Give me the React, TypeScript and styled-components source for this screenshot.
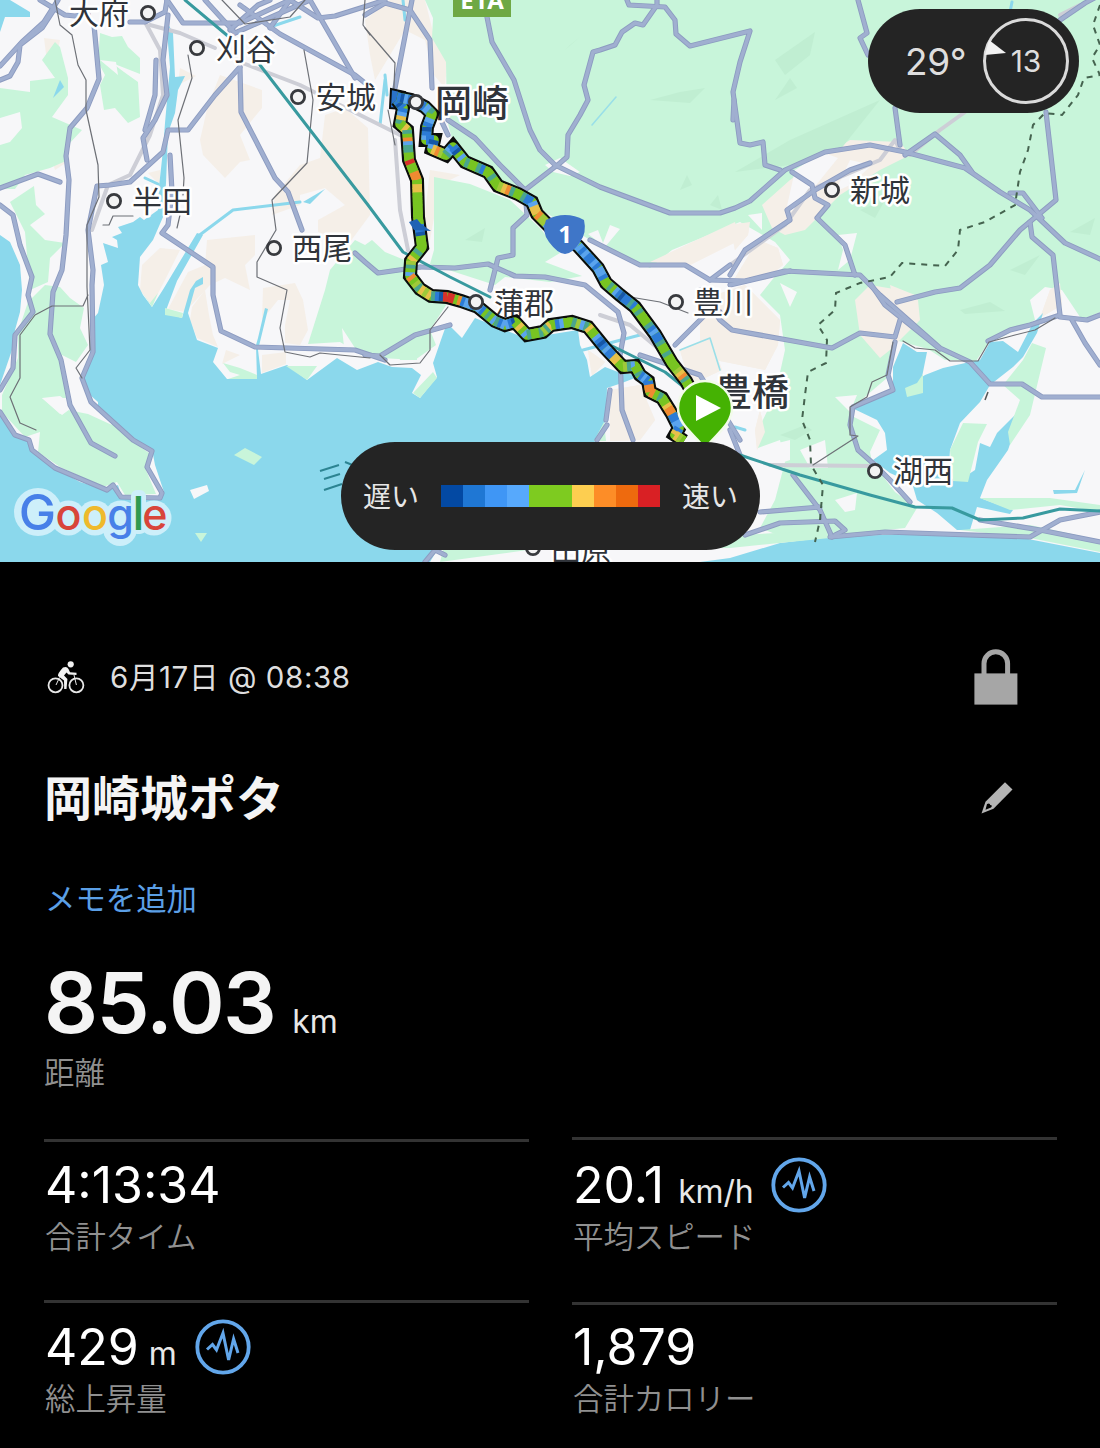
import React from 'react';
import styled, { createGlobalStyle } from 'styled-components';

const SANS = `Inter, "Noto Sans CJK JP", sans-serif`;

const GlobalStyle = createGlobalStyle`
  body { margin: 0; background: #000; font-family: ${SANS}; }
  *, *::before, *::after { box-sizing: border-box; }
`;

/* ---------- map data ---------- */

const WATER = [
  // Mikawa bay and the sea west of the Chita peninsula
  'M0,412 15,435 30,440 33,452 55,468 80,482 107,490 118,485 122,498 161,500 164,492 155,465 152,449 133,439 98,408 98,402 90,395 83,377 90,355 92,320 98,313 104,285 101,265 108,262 103,243 118,248 117,240 112,237 122,233 118,227 133,222 140,217 144,220 158,210 159,187 163,150 165,123 170,67 166,20 173,33 175,77 185,76 178,90 175,113 168,133 166,183 163,217 153,240 140,257 138,285 143,295 152,307 164,288 197,233 203,235 177,281 165,313 182,318 190,290 196,281 203,277 203,284 195,288 188,313 197,340 218,348 213,362 227,379 257,379 256,345 258,338 265,308 268,309 258,350 261,374 287,365 307,380 337,358 357,370 378,362 392,367 412,368 421,375 412,393 420,398 437,377 433,363 442,337 447,323 462,338 475,318 500,328 525,338 547,335 578,330 580,345 587,360 590,377 605,367 618,372 640,376 622,383 607,388 606,420 595,441 585,470 440,545 430,562 0,562Z',
  'M0,235 10,242 20,265 22,290 20,312 15,330 12,350 0,385Z',
  'M0,0 10,0 30,12 30,17 5,17 0,32Z',
  // Lake Hamana
  'M903,343 917,352 927,352 922,377 925,375 943,368 970,362 980,360 990,342 1003,341 1018,352 1033,323 1043,313 1037,333 1023,357 1013,367 990,385 980,402 960,423 950,450 948,478 960,480 975,470 980,443 990,447 997,433 1022,408 1008,450 987,480 980,498 1013,510 1010,514 977,507 970,530 957,530 937,513 917,500 912,483 890,473 873,460 887,450 885,433 877,420 852,408 893,390 893,367Z',
  // Enshu coast
  'M700,562 730,558 780,543 830,537 930,533 1023,538 1100,553 1100,562Z',
  'M1053,490 1075,490 1085,470 1077,493 1054,494Z',
  'M53,98 60,80 64,87Z',
  'M303,202 325,189 310,204Z',
];

const GREEN = [
  'M0,88 30,92 30,81 55,78 42,60 55,42 60,47 68,78 68,95 52,117 82,130 68,145 68,160 50,168 25,175 15,189 0,189Z',
  'M100,33 112,37 122,36 128,47 140,58 140,74 112,63 124,72 138,82 140,117 128,123 115,108 104,110 100,85 105,75 98,62Z',
  'M10,202 34,186 36,205 45,214 30,225 45,240 65,243 50,258 48,282 30,290 25,232Z',
  'M28,302 45,285 60,287 70,298 84,308 80,328 88,345 76,362 62,355 66,398 42,398 60,414 68,410 88,414 112,425 108,418 135,443 149,453 146,470 156,494 125,495 117,482 103,487 60,467 38,452 40,432 25,437 2,412 2,395 18,358 18,332Z',
  'M425,0 1100,0 1100,312 1082,320 1062,290 1045,287 1030,300 1035,320 1000,338 990,340 976,361 945,360 928,349 895,340 890,362 887,378 853,407 852,416 880,430 870,452 872,462 895,492 917,508 905,528 790,540 760,528 775,500 785,462 780,440 758,448 758,430 775,395 785,350 780,315 760,295 772,280 790,260 775,242 740,222 672,250 650,268 590,240 530,203 490,180 455,150 447,120 446,62 432,38 433,18Z',
  'M434,177 470,184 510,200 540,228 560,253 545,262 582,276 550,282 505,277 495,285 430,264 434,250Z',
  'M365,245 372,240 385,252 412,263 428,292 450,299 430,330 436,345 415,360 365,357 340,342 308,344 325,290 330,270 355,240Z',
  'M240,375 230,372 223,363 240,368 257,375 257,379 228,379Z',
  'M286,366 317,366 307,380Z',
  'M142,292 150,303 158,293 152,307Z M165,308 183,313 182,318 165,315Z',
  'M398,353 417,350 417,360 400,360Z M433,372 437,378 420,398 413,393Z',
  'M905,388 917,383 923,374 923,393 907,397Z',
  'M963,423 987,424 978,442 968,482 953,481 950,450Z',
  'M1032,343 1046,348 1030,415 1010,445 1008,432 1020,400 1003,385 1023,360Z',
  'M234,455 245,448 262,457 254,465Z M195,533 207,533 201,542Z',
  'M604,422 606,441 594,441Z M440,562 443,550 730,548 830,538 830,530 740,535 600,540Z',
  'M980,498 1010,510 1060,505 1100,512 1100,505 1050,498Z M960,530 1030,525 1100,540 1100,552 1030,538Z',
];

const BEIGE = [
  'M44,38 60,40 55,65 47,62Z M45,135 60,133 60,150 70,160 55,170Z',
  'M180,68 196,76 178,85Z M220,75 262,90 262,108 240,135 250,160 240,162 225,178 203,155 200,140 208,105Z',
  'M325,115 345,108 368,128 370,215 350,242 318,232 318,220 345,205 325,188 300,195 300,205 272,215 275,195 300,165 320,158Z',
  'M160,185 148,173 160,170Z M142,265 160,248 180,250 165,280 152,305 140,290Z M188,272 205,265 207,240 255,235 255,255 245,265 250,290 225,278 210,285 185,312 168,309Z',
  'M192,307 205,290 209,315 213,335 218,347 197,338 190,320Z M263,288 295,283 303,300 308,330 300,345 285,343 285,325 290,300 278,300 262,320Z',
  'M262,355 286,352 286,364 262,373Z M226,350 240,355 222,364Z',
  'M365,20 390,0 425,0 435,40 447,62 445,88 434,75 425,40 405,30 375,80 370,55Z',
  'M430,170 460,175 440,185 430,240 422,240Z',
  'M665,255 735,222 740,240 690,265 650,262Z M762,205 790,180 810,165 850,140 900,142 910,155 880,170 840,195 805,230 785,235 772,228Z M730,225 750,222 748,235 735,250Z',
  'M700,300 745,285 780,320 778,345 765,370 715,360 700,345Z M758,240 778,248 783,265 765,280 735,278Z',
  'M855,300 870,285 900,290 918,300 920,320 890,350 880,358 860,335Z',
  'M610,390 640,385 655,420 640,440 610,441Z M588,350 605,362 592,376Z M680,350 710,338 722,370 690,385Z',
  'M890,285 915,295 918,322 900,332Z M1050,290 1060,283 1062,305 1040,318Z',
  'M755,430 760,410 765,432 757,450Z',
];

const PALE = [
  'M795,170 822,152 838,158 800,205 785,215Z M850,160 872,165 850,185 835,192Z',
  'M545,165 560,158 580,172 570,176 553,172Z M588,234 598,230 603,243 610,225 620,229 605,247Z',
  'M838,235 857,233 850,260 838,270 843,250Z M748,215 762,213 762,230Z',
  'M835,397 857,395 850,412Z M770,445 790,440 790,460 775,465Z M800,450 825,440 828,468 810,468Z M835,500 857,493 855,510 845,512Z',
  'M780,283 797,292 790,307Z M42,398 60,396 74,406 62,415Z M88,395 100,402 93,403Z',
  'M342,328 355,348 344,347Z M190,490 207,485 209,491 194,499Z',
  'M100,60 116,62 118,75Z M0,118 20,112 22,128 10,142 0,145Z',
];

const SHADE = [
  'M735,172 790,140 880,100 840,150 790,165Z', 'M775,60 815,32 810,55 785,75Z', 'M775,100 790,78 797,88Z',
  'M960,310 990,302 1005,311 965,314Z', 'M860,210 885,200 875,218Z', 'M1070,232 1095,218 1090,235Z',
  'M650,100 680,92 705,88 690,103Z', 'M565,50 580,37 570,45Z', 'M680,190 687,175 692,185Z', 'M710,205 718,195 722,210Z',
  'M465,240 485,228 482,242Z', 'M780,435 805,425 812,430 795,440Z', 'M1010,270 1040,255 1025,275Z',
];

const ROADS = [
  // Chita
  'M58,0 44,22 22,42 0,66', 'M55,8 42,28 20,45 18,62 10,76 0,80', 'M40,0 65,15 75,16 88,14', 'M94,25 99,79 87,108 70,128 66,156 69,180 66,235 62,270 53,292 50,334 61,360 70,405 91,443 115,456',
  'M0,188 38,174 60,182', 'M0,205 13,215 20,245 32,277 28,295 33,312 15,335 13,368 0,390',
  'M0,412 15,435 29,440 32,450 55,468 107,490 113,485 121,497 160,498 162,493 147,467 152,451 133,440 91,402 82,378 93,352 92,285 93,270 88,230 97,186 110,185 130,182 163,152 168,130 188,130 215,95 240,67',
  'M130,22 145,22 165,12 167,0', 'M168,15 163,60 167,95 155,120 143,138 147,160', 'M156,60 155,95 145,130',
  'M170,155 172,192 168,225 162,233 213,267 213,295 221,331 255,347 355,350 385,360',
  'M167,0 183,23 240,23 290,0', 'M205,0 235,33 310,0 355,78', 'M230,30 258,5 270,0', 'M270,28 290,0', 'M290,0 318,18 335,16 370,5 385,0',
  'M240,5 280,34 355,75 365,83', 'M240,68 241,112 275,178 288,192 302,230', 'M355,253 365,262 378,273 420,267',
  // Okazaki and the north
  'M365,15 385,3 410,10 430,40 432,88', 'M412,0 395,88', 'M487,17 492,42 514,80 530,130 540,150 555,165 600,187 670,213 720,213 735,208 750,201 785,170 825,152 870,145 905,152 965,168 1000,192 1030,210 1065,243 1100,259',
  'M448,120 475,138 500,165 525,190 560,163 567,157 568,135 580,115 588,100 584,85 593,52 600,50 615,45 622,32 635,23 643,25 657,5 657,0', 'M627,0 629,5 665,7 675,20 676,34 690,46 750,31 740,62 733,92 740,143 750,145 763,142 765,165 780,170',
  'M525,190 527,215 513,228 513,255 498,258 490,290', 'M420,267 455,268 488,264 515,276 545,277 585,285 618,312 624,333 620,355 622,410 633,440',
  'M440,118 448,135', 'M590,240 640,265 685,265 710,280 745,281 785,271 860,275 880,295 940,348 970,362 990,384 1022,384 1042,397 1100,397',
  'M730,275 745,250 790,220 787,210 815,190 850,170 870,163', 'M792,172 812,185 815,198 828,205 817,218 845,245 855,275',
  'M700,290 720,320 732,330 832,348 860,333 895,337 900,320', 'M710,280 730,265', 'M675,345 705,315 720,312',
  'M734,100 733,120', 'M858,0 867,33 860,38 868,55', 'M895,108 900,145', 'M905,155 935,134 960,155 972,172', 'M1046,112 1056,200 1020,230 990,265 960,288 935,292 897,302', 'M1010,193 1023,193 1042,218', 'M1030,222 1032,237 1053,255 1060,315 1030,325 1010,330 988,341',
  'M1060,317 1087,320 1100,315', 'M1072,320 1085,343 1100,365',
  'M870,283 885,305 940,349', 'M895,342 888,375 893,390 853,407 850,425 858,450 875,465 890,480 910,502',
  'M1060,20 1085,3 1100,-5', 'M730,285 790,271',
  // south
  'M365,355 380,356 415,335 450,325', 'M640,355 700,375 740,440', 'M730,430 740,455', 'M793,475 820,510 832,537', 'M760,512 820,507', 'M745,535 780,523 835,521 845,530 835,535', 'M830,537 885,532 1030,537 1060,520 1100,512', 'M980,520 1040,530 1100,542', 'M425,562 435,550 445,555',
  'M610,390 606,420', 'M597,440 607,425',
];

const RAIL = [
  'M145,22 160,50 163,95 150,135 130,175 108,185 92,230', 'M150,25 180,33 215,48', 'M240,62 300,85 370,120 400,135', 'M395,140 400,210 408,250',
  'M730,265 785,225 810,190 880,160 895,140 900,150 910,155 940,130 965,112', 'M600,315 630,325 660,350', 'M770,465 873,466', 'M1060,15 1080,5',
];
const THIN = [
  'M55,0 60,25 72,35 78,65 86,80 86,110 98,165 99,197 87,225 87,287 90,350 76,368 82,378', 'M88,295 83,306 52,306 35,315 20,335 20,378 10,397 20,423 36,430',
  'M188,55 192,78 178,120 184,178 183,195', 'M180,215 177,228', 'M222,0 245,24 290,17 305,0', 'M304,50 313,100 307,163 272,200 276,230 257,262 257,277 287,290 280,328 285,352 310,357 320,353 370,358',
  'M365,28 395,63 393,108', 'M365,0 363,25 370,35', 'M388,110 395,145', 'M448,307 430,330 430,350 420,363 390,365 380,355', 'M630,297 660,302 688,313',
  'M893,342 887,375 872,382 867,397 850,407 850,435 858,436 813,465', 'M903,341 915,348 935,350 950,361 978,361 989,342 1015,335 1035,330 1055,318', 'M103,225 109,225 113,216 133,216',
];
const RIVERS = ['M197,237 233,210 300,202', 'M385,80 380,125', 'M385,75 387,95', 'M145,178 158,184', 'M403,0 405,20', 'M583,350 640,335', 'M270,27 300,17', 'M1012,2 1010,12', 'M735,427 745,430'];
const CREEKS = ['M680,350 710,338 720,370', 'M592,125 616,97'];
const EXPRESS = ['M185,0 235,42', 'M260,65 368,205 403,252 450,277 490,297', 'M600,340 665,372 700,400', 'M740,455 800,475 870,495 915,507 952,508 980,520 1023,518 1060,509 1100,511'];
const BORDER = 'M1100,5 1093,25 1100,45 1092,58 1100,75 1084,78 1078,95 1062,115 1045,113 1033,125 1028,150 1020,172 1015,205 985,222 960,230 958,250 945,266 902,263 890,277 860,283 836,293 835,310 818,325 827,340 826,363 808,372 805,395 802,420 810,440 811,465 823,485 820,520 815,542';

type Point = [number, number];

const ROUTE_WEST: Point[] = [
  [397, 100], [403, 108], [400, 124], [407, 130], [409, 160], [417, 180], [418, 217], [422, 247], [411, 261], [410, 276], [420, 289], [431, 296], [447, 297], [461, 301], [478, 307], [495, 321], [505, 325], [515, 322], [527, 335], [543, 332], [551, 325], [572, 322], [588, 327], [605, 348], [623, 367], [635, 366], [640, 375], [648, 381], [650, 392], [662, 398], [672, 414], [679, 428], [675, 435], [684, 441],
];
const ROUTE_EAST: Point[] = [
  [397, 97], [411, 100], [425, 107], [432, 114], [427, 127], [426, 140], [434, 140], [432, 149], [446, 155], [453, 147], [465, 162], [488, 172], [498, 186], [518, 194], [532, 202], [537, 214], [552, 229], [578, 246], [598, 268], [606, 283], [620, 295], [635, 307], [655, 334], [672, 363], [686, 381], [695, 398],
];
const SPEED: Record<string, string> = {
  d: '#1657a8', b: '#2c7bd6', s: '#5aa4ee', t: '#4aa58e', g: '#78c422', l: '#9fc93a', y: '#e8c04a', o: '#f08a32', r: '#d8302a',
};
const WEST_SPEED = 'bdbbsytgytgosttggrggoogyyggggggggbbdggggtgyltgsoglty' + 'lytbdrrrgobssbt' + 'sbgtgstbssbdgygstggtltygbsggtlstyggsbdbsbbyyggltsggtbsbbooogtggyoobbssbyylgbdbb';
const EAST_SPEED = 'bdsbsbdbstgsbdbsbbdsyolgtsbbdgsgtggtbggtgglyotggtbbsyyollsbdbbsgtgssbsbbsbssbggtgsbdbbtbgtgggtbsbbtggtgggglyotggtgbtgggltgtbbsoyo';

function walk(points: Point[], codes: string, step: number) {
  const pieces: { d: string; color: string }[] = [];
  let index = 0;
  for (let i = 0; i < points.length - 1; i++) {
    const [x1, y1] = points[i];
    const [x2, y2] = points[i + 1];
    const length = Math.hypot(x2 - x1, y2 - y1);
    const count = Math.max(1, Math.round(length / step));
    for (let k = 0; k < count; k++) {
      const a = k / count;
      const b = Math.min(1, (k + 1.15) / count);
      pieces.push({
        d: `M${x1 + (x2 - x1) * a},${y1 + (y2 - y1) * a} ${x1 + (x2 - x1) * b},${y1 + (y2 - y1) * b}`,
        color: SPEED[codes[index % codes.length]],
      });
      index++;
    }
  }
  return pieces;
}

const line = (points: Point[]) => 'M' + points.map((p) => p.join(',')).join(' ');

const PLACES = [
  { name: '大府', x: 69, y: 24, dot: [148, 13] },
  { name: '刈谷', x: 216, y: 60, dot: [197, 48] },
  { name: '安城', x: 316, y: 108, dot: [298, 97] },
  { name: '半田', x: 132, y: 212, dot: [114, 201] },
  { name: '西尾', x: 292, y: 259, dot: [274, 248] },
  { name: '新城', x: 850, y: 201, dot: [832, 190] },
  { name: '蒲郡', x: 494, y: 314, dot: [476, 302] },
  { name: '豊川', x: 693, y: 313, dot: [676, 302] },
  { name: '湖西', x: 893, y: 482, dot: [875, 471] },
  { name: '田原', x: 551, y: 561, dot: [533, 548] },
];

/* ---------- map ---------- */

const MapPanel = styled.section`
  position: relative;
  height: 562px;
  overflow: hidden;
`;
const MapCanvas = styled.svg`
  display: block;
  width: 1100px;
  height: 562px;
`;
const PlaceName = styled.text<{ $large?: boolean }>`
  font-family: "Noto Sans CJK JP", sans-serif;
  font-size: ${(p) => (p.$large ? 37 : 30)}px;
  font-weight: ${(p) => (p.$large ? 500 : 400)};
  fill: #30343a;
  stroke: #fff;
  stroke-width: 5px;
  stroke-linejoin: round;
  paint-order: stroke;
`;
const SignText = styled.text`
  font-family: "Open Sans", sans-serif;
  font-weight: 700;
  font-size: 24px;
  fill: #fff;
  text-anchor: middle;
`;
const Wordmark = styled.text`
  font-family: Inter, sans-serif;
  font-weight: 500;
  text-anchor: middle;
`;

const Strokes = ({ paths, color, width }: { paths: string[]; color: string; width: number }) => (
  <g fill="none" stroke={color} strokeWidth={width} strokeLinejoin="round" strokeLinecap="round">
    {paths.map((d) => <path key={d} d={d} />)}
  </g>
);
const Areas = ({ paths, color }: { paths: string[]; color: string }) => (
  <g fill={color}>{paths.map((d) => <path key={d} d={d} />)}</g>
);

const GOOGLE = [
  { ch: 'G', x: 37.5, size: 50, color: '#4880e8' },
  { ch: 'o', x: 68.5, size: 43, color: '#d8453a' },
  { ch: 'o', x: 95, size: 43, color: '#efb92c' },
  { ch: 'g', x: 120.5, size: 43, color: '#4880e8' },
  { ch: 'l', x: 138.5, size: 47, color: '#2f9a50' },
  { ch: 'e', x: 155, size: 43, color: '#d8453a' },
];

const RouteMap = () => (
  <MapCanvas viewBox="0 0 1100 562">
    <rect width="1100" height="562" fill="#f7f7f9" />
    <Areas paths={BEIGE} color="#f5efe8" />
    <Areas paths={GREEN.slice(0, 7)} color="#c8f5da" />
    <Areas paths={BEIGE.slice(8)} color="#f5efe8" />
    <Areas paths={PALE.slice(0, 5)} color="#f7f7f9" />
    <Areas paths={SHADE} color="#c0eed2" />
    <Areas paths={WATER} color="#8bd8ec" />
    <Areas paths={GREEN.slice(7)} color="#c8f5da" />
    <Areas paths={PALE.slice(5)} color="#f7f7f9" />
    <Strokes paths={RIVERS} color="#8bd8ec" width={3} />
    <Strokes paths={CREEKS} color="#9adfe8" width={1.6} />
    <Strokes paths={RAIL} color="#cdced6" width={4} />
    <Strokes paths={ROADS} color="#8c9bc0" width={5.2} />
    <Strokes paths={ROADS} color="#a0afd0" width={3.4} />
    <Strokes paths={THIN} color="#6d7076" width={1.2} />
    <Strokes paths={EXPRESS} color="#389a9f" width={3} />
    <path d={BORDER} fill="none" stroke="#45634f" strokeWidth="2" strokeDasharray="6 6" />
    <path d="M320,471 339,465 M324,479 340,474 M324,490 342,484 M345,462 355,466" stroke="#2c8492" strokeWidth="2" />
    <path d="M988,392 985,400" stroke="#555" strokeWidth="1.5" />

    <rect x="453" y="-20" width="58" height="37" fill="#6fa844" />
    <SignText x="482" y="9">E1A</SignText>

    {PLACES.map((p) => <PlaceName key={p.name} x={p.x} y={p.y}>{p.name}</PlaceName>)}
    <PlaceName $large x="435" y="117">岡崎</PlaceName>
    <PlaceName $large x="715" y="406">豊橋</PlaceName>

    <path d="M391,89 405,92 402,109 390,108Z" fill="#2a72ca" stroke="#0b0d0c" strokeWidth="2" />
    {[ROUTE_WEST, ROUTE_EAST].map((route, i) => (
      <path key={i} d={line(route)} fill="none" stroke="#0b0d0c" strokeWidth="14" strokeLinejoin="miter" />
    ))}
    {[ROUTE_WEST, ROUTE_EAST].map((route, i) => (
      <g key={i} fill="none">
        <path d={line(route)} stroke="#78c422" strokeWidth="9.6" strokeLinejoin="round" />
        {walk(route, i ? EAST_SPEED : WEST_SPEED, 4).map((s, k) => <path key={k} d={s.d} stroke={s.color} strokeWidth="9.6" />)}
      </g>
    ))}
    <path d="M409,222 417,219 421,224 431,231 414,230Z" fill="#1f62b4" />

    {[...PLACES.map((p) => p.dot), [416, 102]].map(([x, y]) => (
      <circle key={`${x}-${y}`} cx={x} cy={y} r="6.6" fill="#f3f3f3" stroke="#383a3e" strokeWidth="2.8" />
    ))}

    <path d="M546,220 Q556,215 565,215 Q575,215 584,220 Q587,233 580,242 Q572,254 565,254 Q558,254 549,242 Q541,231 546,220Z" fill="#3f76c8" />
    <SignText x="565" y="243">1</SignText>

    <path d="M705,449 C697,436 678,426 678,408 A27,27 0 0 1 732,408 C732,426 713,436 705,449Z" fill="#45b203" stroke="#f2fbea" strokeWidth="2.5" />
    <path d="M696,395 721,408 696,421Z" fill="#fff" />

    <g fill="#cdeffa">
      <circle cx="38" cy="512" r="24" />
      <circle cx="68.5" cy="518" r="17.5" />
      <circle cx="95" cy="518" r="17.5" />
      <circle cx="121" cy="518" r="17.5" />
      <circle cx="120" cy="529" r="17" />
      <circle cx="154" cy="518" r="17.5" />
      <rect x="131" y="490" width="15" height="44" rx="6" />
    </g>
    <Wordmark>
      {GOOGLE.map((g) => <tspan key={g.x} x={g.x} y="530" fontSize={g.size} fill={g.color}>{g.ch}</tspan>)}
    </Wordmark>
  </MapCanvas>
);

const WeatherPill = styled.div`
  position: absolute;
  top: 9px;
  left: 868px;
  width: 211px;
  height: 104px;
  padding: 0 10px 0 37px;
  border-radius: 52px;
  background: #242424;
  display: flex;
  align-items: center;
  justify-content: space-between;
`;
const Temperature = styled.span`
  font-size: 37px;
  letter-spacing: -0.4px;
  color: #dedede;
`;
const Wind = styled.div`
  position: relative;
  width: 86px;
  height: 86px;
  border: 3px solid #dadada;
  border-radius: 50%;
  display: flex;
  align-items: center;
  justify-content: center;
  font-size: 30px;
  color: #dedede;
`;
const WindArrow = styled.svg`
  position: absolute;
  left: -2px;
  top: 18px;
  width: 24px;
  height: 18px;
`;

const LegendPill = styled.div`
  position: absolute;
  left: 341px;
  top: 442px;
  width: 419px;
  height: 108px;
  padding: 0 22px;
  border-radius: 54px;
  background: #242424;
  display: flex;
  align-items: center;
  justify-content: space-between;
  font-family: "Noto Sans CJK JP", sans-serif;
  font-size: 28px;
  line-height: 40px;
  color: #e6e6e6;
`;
const LegendLabel = styled.span`
  padding-bottom: 3px;
`;
const Scale = styled.div`
  display: flex;
  width: 219px;
  height: 22px;
`;
const Swatch = styled.span<{ $color: string }>`
  flex: 1;
  background: ${(p) => p.$color};
`;
const SCALE = ['#0349a3', '#1f77d4', '#3f96f5', '#57a9fc', '#7ecb20', '#7ecb20', '#fdce50', '#fd8d27', '#ee6a0e', '#d92024'];

/* ---------- details ---------- */

const Details = styled.section`
  height: 886px;
  padding: 82px 43px 0 44px;
  background: #000;
  color: #f4f4f4;
`;
const MetaRow = styled.header`
  display: flex;
  align-items: center;
  height: 66px;
  padding: 0 39px 0 3px;
`;
const DateText = styled.span`
  flex: 1;
  margin-left: 25px;
  font-size: 29.5px;
  letter-spacing: 0.6px;
  line-height: 40px;
  color: #dedede;
`;
const TitleRow = styled.div`
  display: flex;
  align-items: center;
  justify-content: space-between;
  height: 60px;
  margin-top: 58px;
  padding-right: 44px;
`;
const Title = styled.h1`
  margin: 0;
  padding-bottom: 5px;
  font-family: "Noto Sans CJK JP", sans-serif;
  font-size: 48px;
  font-weight: 700;
  line-height: 55px;
`;
const AddNote = styled.a`
  display: block;
  height: 40px;
  margin-top: 49px;
  padding-left: 1px;
  font-family: "Noto Sans CJK JP", sans-serif;
  font-size: 30.4px;
  line-height: 40px;
  color: #5b9fe6;
`;
const Distance = styled.div`
  display: flex;
  align-items: baseline;
  gap: 17px;
  height: 85px;
  margin-top: 43px;
  font-size: 84.5px;
  font-weight: 600;
  letter-spacing: -1.6px;
  line-height: 85px;
`;
const Unit = styled.span`
  font-size: 32px;
  font-weight: 400;
  letter-spacing: -0.2px;
  line-height: 1;
  color: #e8e8e8;
`;
const Label = styled.div<{ $gap: number }>`
  height: 40px;
  margin-top: ${(p) => p.$gap}px;
  font-family: "Noto Sans CJK JP", sans-serif;
  font-size: 30.4px;
  font-weight: 350;
  line-height: 40px;
  color: #909090;
`;
const Stats = styled.div`
  display: grid;
  grid-template-columns: 485px 485px;
  column-gap: 43px;
  margin-top: 46px;
`;
const Column = styled.div<{ $lift: number; $gap: number }>`
  display: flex;
  flex-direction: column;
  gap: ${(p) => p.$gap}px;
  margin-top: ${(p) => p.$lift}px;
`;
const Stat = styled.div<{ $pad: number }>`
  border-top: 3px solid #333;
  padding: ${(p) => p.$pad}px 0 0 1px;
`;
const ValueRow = styled.div`
  display: flex;
  align-items: center;
  gap: 18px;
  height: 56px;
`;
const Value = styled.div<{ $unitGap: number }>`
  display: flex;
  align-items: baseline;
  gap: ${(p) => p.$unitGap}px;
  font-size: 50px;
  line-height: 50px;
  color: #fff;
`;

const PulseIcon = () => (
  <svg width="56" height="56" viewBox="-28 -28 56 56" fill="none" stroke="#62a6ea">
    <circle r="25.7" strokeWidth="3.8" />
    <path d="M-16,2.5 -10.5,-2.5 -6.5,3 0,-14 5.6,13 10.6,-8 15,6" strokeWidth="3" strokeLinejoin="miter" />
  </svg>
);
const CyclistIcon = () => (
  <svg width="38" height="34" viewBox="0 0 38 34" fill="none" stroke="#e8e8e8">
    <circle cx="8.5" cy="25.3" r="7" strokeWidth="1.8" />
    <circle cx="29.4" cy="25.3" r="7" strokeWidth="1.8" />
    <circle cx="23.7" cy="4.3" r="3.1" fill="#f2f2f2" stroke="none" />
    <path d="M16,7.5 Q20,6 21.5,9 L23,12.3 29.5,12.8 29.5,15 21.5,14.6 19.5,12.5 17,15.5 20.4,19 19.5,29 17.2,29 17,20.5 11,16 Q10.5,13.5 16,7.5Z" fill="#f2f2f2" stroke="none" />
    <path d="M9,25 12.5,17.5 M27,15 29.4,25" strokeWidth="1" />
  </svg>
);
const LockIcon = () => (
  <svg width="44" height="56" viewBox="0 0 44 56">
    <path d="M10,26 V14.5 a11.8,11.8 0 0 1 23.6,0 V26" fill="none" stroke="#a6a6a6" strokeWidth="5" />
    <rect x="0.4" y="24.4" width="43" height="31.2" fill="#a6a6a6" />
  </svg>
);
const PencilIcon = () => (
  <svg width="32" height="32" viewBox="0 0 32 32">
    <path d="M24,0.3 31.5,7.5 12.5,26.7 0.5,31.5 4.5,19.8Z" fill="#b4b4b4" />
    <path d="M6,22 Q9,20.5 9.2,23 Q12,23 10,25.5 L4.5,27.8Z" fill="#000" />
  </svg>
);

type StatItem = { value: string; unit?: string; unitGap?: number; chart?: boolean; label: string; pad: number; gap: number };

const LEFT: StatItem[] = [
  { value: '4:13:34', label: '合計タイム', pad: 15, gap: 2 },
  { value: '429', unit: 'm', unitGap: 10, chart: true, label: '総上昇量', pad: 16, gap: 2 },
];
const RIGHT: StatItem[] = [
  { value: '20.1', unit: 'km/h', unitGap: 14, chart: true, label: '平均スピード', pad: 17, gap: 2 },
  { value: '1,879', label: '合計カロリー', pad: 14, gap: 2 },
];

const StatCell = ({ item }: { item: StatItem }) => (
  <Stat $pad={item.pad}>
    <ValueRow>
      <Value $unitGap={item.unitGap ?? 12}>{item.value}{item.unit && <Unit>{item.unit}</Unit>}</Value>
      {item.chart && <PulseIcon />}
    </ValueRow>
    <Label $gap={item.gap}>{item.label}</Label>
  </Stat>
);

export default function App() {
  return (
    <main>
      <GlobalStyle />
      <MapPanel>
        <RouteMap />
        <WeatherPill>
          <Temperature>29°</Temperature>
          <Wind>
            <WindArrow viewBox="0 0 24 18"><path d="M5,1 22,14 1,16Z" fill="#f2f2f2" /></WindArrow>
            13
          </Wind>
        </WeatherPill>
        <LegendPill>
          <LegendLabel>遅い</LegendLabel>
          <Scale>{SCALE.map((c, i) => <Swatch key={i} $color={c} />)}</Scale>
          <LegendLabel>速い</LegendLabel>
        </LegendPill>
      </MapPanel>
      <Details>
        <MetaRow>
          <CyclistIcon />
          <DateText>6月17日 @ 08:38</DateText>
          <LockIcon />
        </MetaRow>
        <TitleRow>
          <Title>岡崎城ポタ</Title>
          <PencilIcon />
        </TitleRow>
        <AddNote>メモを追加</AddNote>
        <Distance>85.03<Unit>km</Unit></Distance>
        <Label $gap={6}>距離</Label>
        <Stats>
          <Column $lift={2} $gap={45}>{LEFT.map((s) => <StatCell key={s.label} item={s} />)}</Column>
          <Column $lift={0} $gap={47}>{RIGHT.map((s) => <StatCell key={s.label} item={s} />)}</Column>
        </Stats>
      </Details>
    </main>
  );
}
